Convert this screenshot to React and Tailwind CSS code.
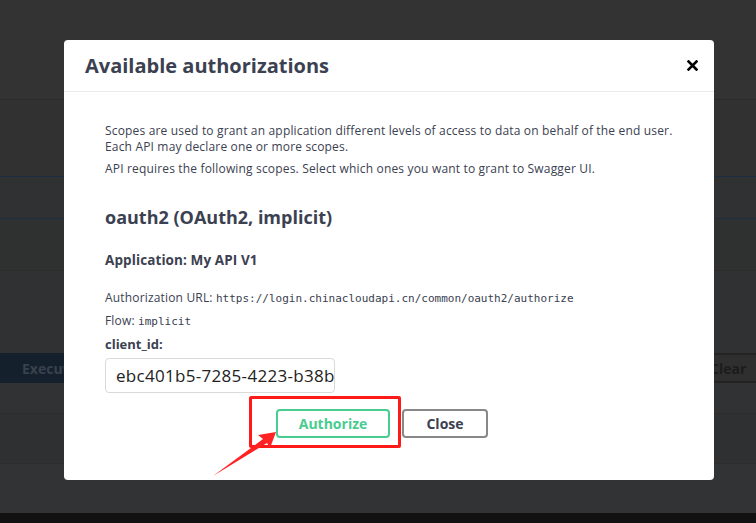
import React from 'react';

// Backdrop rows of the dimmed API page behind the dialog
function PageBehind() {
  return (
    <div className="flex flex-col h-[523px] w-full">
      <div className="h-[99px] bg-[#333333] shrink-0" />
      <div className="h-[77px] bg-[#313131] border-t border-[#2b2b2b] shrink-0" />
      <div className="h-[43px] bg-[#2f3133] border-y border-[#1c2d42] shrink-0" />
      <div className="h-[51px] bg-[#2f3030] shrink-0" />
      <div className="h-[83px] bg-[#303132] border-t border-[#2c2c2c] shrink-0" />
      <div className="h-[30px] flex shrink-0 bg-[#303132]">
        <div className="w-[700px] bg-[#15202d] flex items-center pl-[22px] text-[14px] font-bold text-[#39414d]">
          Execute
        </div>
        <div className="flex-1 border-y-2 border-[#232323] bg-[#2f2f2f] flex items-center pl-[10px] text-[14px] font-bold text-[#1c1c1c]">
          Clear
        </div>
      </div>
      <div className="h-[30px] bg-[#313233] shrink-0" />
      <div className="h-[50px] bg-[#2f3031] border-t border-[#2c2c2c] shrink-0" />
      <div className="h-[50px] bg-[#323334] border-t border-[#2d2d2d] shrink-0" />
      <div className="flex-1 bg-[#111111]" />
    </div>
  );
}

const mono = { fontFamily: '"DejaVu Sans Mono", monospace' };

export default function App() {
  return (
    <div
      className="relative w-[756px] h-[523px] overflow-hidden"
      style={{ fontFamily: '"Open Sans", "Noto Sans", sans-serif' }}
    >
      <PageBehind />

      {/* Auth dialog */}
      <div className="absolute left-[64px] top-[40px] w-[650px] h-[440px] bg-white rounded-[4px] text-[#3b4151]">
        <div className="h-[52px] flex items-center justify-between pl-[21px] pr-[14px] border-b border-[#ebebeb]">
          <h4 className="text-[20px] font-bold">Available authorizations</h4>
          <button className="w-[16px] h-[16px] flex items-center justify-center">
            <svg width="11" height="11" viewBox="0 0 11 11">
              <path d="M1.5 1.5 L9.5 9.5 M9.5 1.5 L1.5 9.5" stroke="#000" strokeWidth="2.6" strokeLinecap="square" />
            </svg>
          </button>
        </div>

        <div className="px-[41px] pt-[31px]">
          <p className="text-[12px] leading-[16px] tracking-[0.17px]">
            Scopes are used to grant an application different levels of access to data on behalf of the end user.
            <br />
            Each API may declare one or more scopes.
          </p>
          <p className="text-[12px] leading-[16px] mt-[6px] tracking-[0.17px]">
            API requires the following scopes. Select which ones you want to grant to Swagger UI.
          </p>

          <h4 className="text-[18px] font-bold mt-[28px] leading-[24px]">oauth2 (OAuth2, implicit)</h4>
          <h6 className="text-[13.5px] font-bold mt-[22px] leading-[18px] tracking-[0.1px]">Application: My API V1</h6>

          <p className="text-[12px] leading-[16px] mt-[21px] tracking-[0.17px]">
            Authorization URL:{' '}
            <code className="text-[11px] tracking-normal" style={mono}>
              https://login.chinacloudapi.cn/common/oauth2/authorize
            </code>
          </p>
          <p className="text-[12px] leading-[16px] mt-[6px] tracking-[0.17px]">
            Flow:{' '}
            <code className="text-[11px] tracking-normal" style={mono}>
              implicit
            </code>
          </p>

          <label className="block text-[13px] font-bold mt-[5px] leading-[18px]">client_id:</label>
          <div className="mt-[5px] w-[230px] h-[35px] border border-[#d9d9d9] rounded-[4px] flex items-center px-[10px] overflow-hidden">
            <span className="text-[17px] tracking-[0.3px] whitespace-nowrap text-[#222]">ebc401b5-7285-4223-b38b</span>
          </div>

          <div className="flex gap-[12px] mt-[16px] ml-[171px]">
            <button className="w-[114px] h-[29px] border-2 border-[#49cc90] rounded-[4px] text-[14px] font-bold text-[#49cc90]">
              Authorize
            </button>
            <button className="w-[86px] h-[29px] border-2 border-[#888888] rounded-[4px] text-[14px] font-bold text-[#3b4151]">
              Close
            </button>
          </div>
        </div>
      </div>

      {/* Red callout box and arrow */}
      <div className="absolute left-[249px] top-[396px] w-[152px] h-[52px] border-[3px] border-[#ff1a1a] rounded-[2px]" />
      <svg className="absolute left-0 top-0" width="756" height="523" viewBox="0 0 756 523">
        <polygon points="276,432 258,435 263,439 213,476 267,443 270,448" fill="#ff2323" />
      </svg>
    </div>
  );
}
